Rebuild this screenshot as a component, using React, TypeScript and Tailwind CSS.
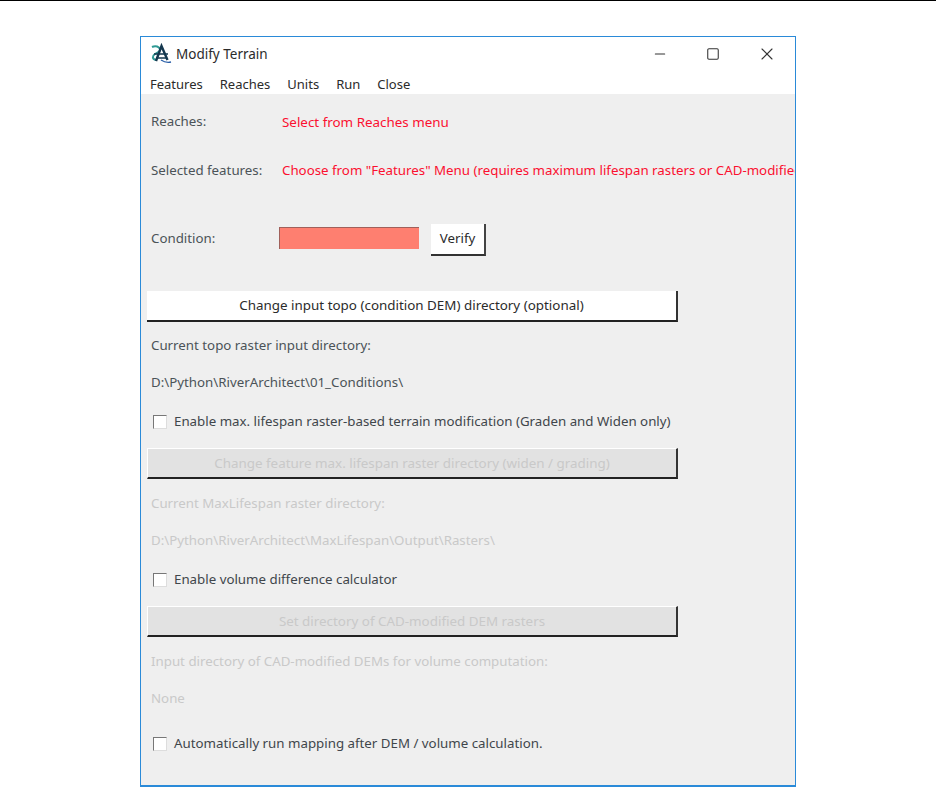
import { Minus, Square, X } from 'lucide-react'

const font = { fontFamily: '"Noto Sans", "Open Sans", sans-serif' }

function Label({ children, muted, className = '' }: { children: React.ReactNode; muted?: boolean; className?: string }) {
  return (
    <p className={`flex h-6 shrink-0 items-center whitespace-nowrap pl-[10px] text-[13.3px] ${muted ? 'text-[#c9c9c9]' : 'text-[#4b5358]'} ${className}`}>
      {children}
    </p>
  )
}

function WideButton({ children, disabled, className = '' }: { children: React.ReactNode; disabled?: boolean; className?: string }) {
  return (
    <button
      type="button"
      className={`ml-[6px] flex h-[31px] w-[531px] items-center justify-center border-b-2 border-r-2 border-b-[#222] border-r-[#333] text-[13.4px] ${disabled ? 'border-l border-t border-l-white border-t-white bg-[#e2e2e2] text-[#c9c9c9]' : 'bg-white text-[#2b2b2b]'} ${className}`}
    >
      {children}
    </button>
  )
}

function Check({ children, className = '' }: { children: React.ReactNode; className?: string }) {
  return (
    <div className={`flex h-6 items-center gap-[7px] pl-[12px] text-[13.3px] text-[#3f464b] ${className}`}>
      <span className="h-[14px] w-[14px] border border-[#777] border-b-[#ddd] border-r-[#ddd] bg-white" />
      <span className="whitespace-nowrap">{children}</span>
    </div>
  )
}

export default function App() {
  return (
    <div className="h-[787px] w-[936px] overflow-hidden bg-white" style={font}>
      <div className="h-px bg-black" />
      <div className="ml-[140px] mt-[35px] flex h-[751px] w-[656px] flex-col overflow-hidden border border-[#2a8ad8] border-b-2">
        <div className="flex h-[34px] shrink-0 items-center bg-white pl-[9px]">
          <svg width="22" height="22" viewBox="0 0 22 22" fill="none">
            <path d="M2 4c4-2 7 0 8 2s-2 3-5 5-3 5 1 6" stroke="#2f9a94" strokeWidth="2" />
            <path d="M6 18 11.5 3l6 14" stroke="#15384f" strokeWidth="2.4" />
            <path d="M4 11h14M6 15h11" stroke="#15384f" strokeWidth="1.6" />
            <path d="M11 17c3 2 6 3 10 2" stroke="#2b5fa8" strokeWidth="1.4" />
          </svg>
          <span className="ml-[4px] text-[13.5px] text-[#2b2b2b]">Modify Terrain</span>
          <div className="ml-auto flex items-center text-[#333]">
            <Minus size={16} strokeWidth={1.6} className="mr-[38px]" />
            <Square size={14} strokeWidth={1.8} className="mr-[37px]" />
            <X size={20} strokeWidth={1.3} className="mr-[18px]" />
          </div>
        </div>
        <div className="flex h-[23px] shrink-0 items-center gap-[17px] bg-white pl-[9px] pt-[4px] text-[13px] text-[#2b2b2b]">
          <span>Features</span>
          <span>Reaches</span>
          <span>Units</span>
          <span>Run</span>
          <span>Close</span>
        </div>
        <div className="flex-1 bg-[#efefef] pt-[16px]">
          <div className="flex">
            <Label className="w-[141px]">Reaches:</Label>
            <p className="flex h-6 items-center whitespace-nowrap text-[13.4px] text-[#fb1030]">Select from Reaches menu</p>
          </div>
          <div className="mt-[25px] flex">
            <Label className="w-[141px]">Selected features:</Label>
            <p className="flex h-6 items-center whitespace-nowrap text-[13.3px] text-[#fb1030]">
              Choose from "Features" Menu (requires maximum lifespan rasters or CAD-modified DEMs)
            </p>
          </div>
          <div className="mt-[40px] flex h-[33px] items-center">
            <Label className="mb-[2px] w-[138px]">Condition:</Label>
            <div className="-mt-[3px] h-[22px] w-[140px] border-l border-t border-l-[#a0605a] border-t-[#a0605a] bg-[#fe7f70]" />
            <button
              type="button"
              className="ml-[12px] h-[32px] w-[55px] border-b-2 border-r-2 border-b-[#333] border-r-[#444] bg-white text-[13.3px] text-[#2b2b2b]"
            >
              Verify
            </button>
          </div>
          <WideButton className="mt-[35px]">Change input topo (condition DEM) directory (optional)</WideButton>
          <Label className="mt-[12px]">Current topo raster input directory:</Label>
          <Label className="mt-[13px]">D:\Python\RiverArchitect\01_Conditions\</Label>
          <Check className="mt-[15px]">Enable max. lifespan raster-based terrain modification (Graden and Widen only)</Check>
          <WideButton disabled className="mt-[14px]">Change feature max. lifespan raster directory (widen / grading)</WideButton>
          <Label muted className="mt-[13px]">Current MaxLifespan raster directory:</Label>
          <Label muted className="mt-[13px]">D:\Python\RiverArchitect\MaxLifespan\Output\Rasters\</Label>
          <Check className="mt-[15px]">Enable volume difference calculator</Check>
          <WideButton disabled className="mt-[14px]">Set directory of CAD-modified DEM rasters</WideButton>
          <Label muted className="mt-[13px]">Input directory of CAD-modified DEMs for volume computation:</Label>
          <Label muted className="mt-[13px]">None</Label>
          <Check className="mt-[21px]">Automatically run mapping after DEM / volume calculation.</Check>
        </div>
      </div>
    </div>
  )
}
